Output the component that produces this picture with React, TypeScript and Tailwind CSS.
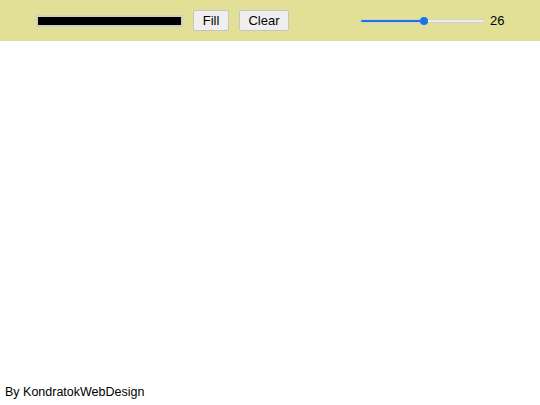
import React from "react";

export default function App() {
  const size = 26;
  const pct = ((size - 1) / 49) * 100;
  return (
    <div className="h-[405px] w-[540px] flex flex-col bg-white" style={{ fontFamily: '"Liberation Sans", Arial, sans-serif' }}>
      <div className="h-[41px] bg-[#e2e097] flex items-center shrink-0">
        <div className="ml-[36px] w-[147px] h-[12px] border-2 border-[#cfcfc4] bg-black rounded-[1px]" />
        <button className="ml-[10px] w-[36px] h-[21px] bg-[#efefef] border border-[#c4c4c4] rounded-[2px] text-[13px] leading-none text-black">Fill</button>
        <button className="ml-[10px] w-[50px] h-[21px] bg-[#efefef] border border-[#c4c4c4] rounded-[2px] text-[13px] leading-none text-black">Clear</button>
        <div className="ml-[71px] w-[125px] h-[12px] relative flex items-center">
          <div className="w-full h-[4px] rounded-full bg-[#ececec] border border-[#d2d2c8] overflow-hidden">
            <div className="h-full bg-[#1a73e8]" style={{ width: `${pct}%` }} />
          </div>
          <div
            className="absolute top-1/2 w-[8px] h-[8px] -mt-[4px] -ml-[4px] rounded-full bg-[#1a73e8]"
            style={{ left: `${pct}%` }}
          />
        </div>
        <span className="ml-[5px] text-[13px] text-black">{size}</span>
      </div>
      <div className="flex-1" />
      <div className="pl-[5px] pb-[5px] text-[12.5px] text-black leading-[15px]">By KondratokWebDesign</div>
    </div>
  );
}
